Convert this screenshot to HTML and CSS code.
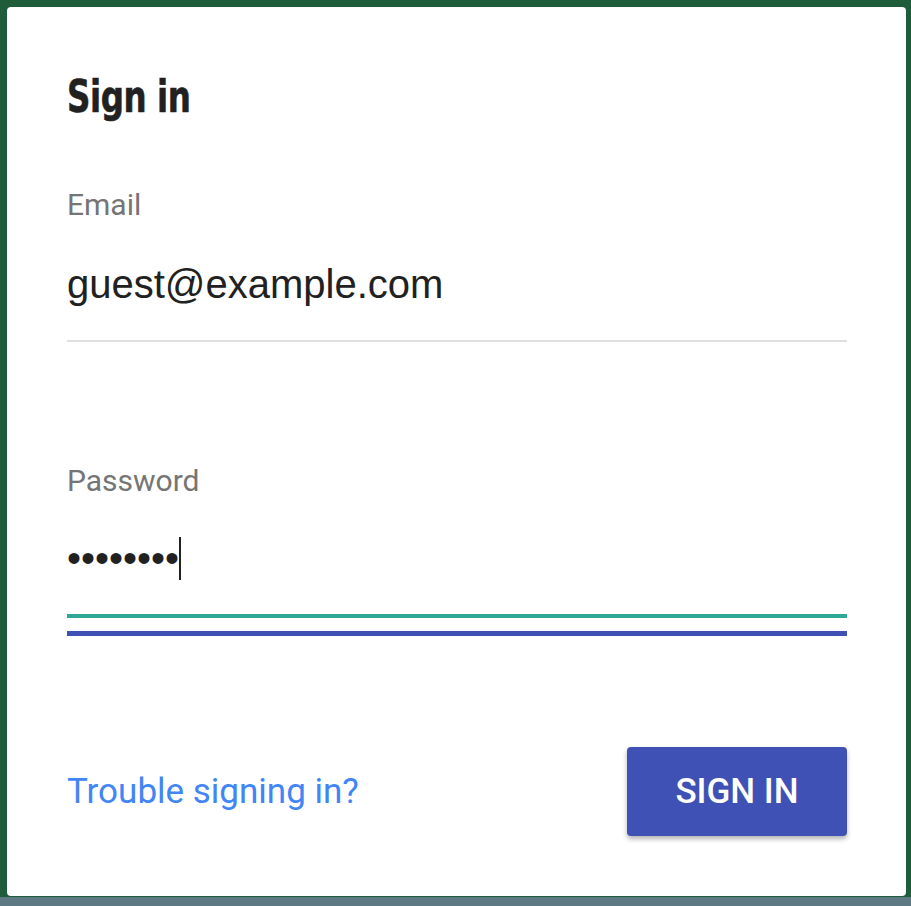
FILE: index.html
```html
<!DOCTYPE html>
<html lang="en">
<head>
<meta charset="utf-8">
<title>Sign in</title>
<link rel="stylesheet" href="styles.css">
</head>
<body>
<div class="backdrop">
  <main class="card">
    <h1 class="title">Sign in</h1>
    <div class="field">
      <label class="label">Email</label>
      <div class="value">guest@example.com</div>
      <div class="underline"></div>
    </div>
    <div class="field field-password">
      <label class="label">Password</label>
      <div class="value"><span class="dots">••••••••</span><span class="caret"></span></div>
      <div class="focus-line teal"></div>
      <div class="focus-line indigo"></div>
    </div>
    <div class="actions">
      <a class="trouble" href="#">Trouble signing in?</a>
      <button class="signin" type="button">SIGN IN</button>
    </div>
  </main>
</div>
</body>
</html>
```
FILE: styles.css
```css
html {
  background: #5d7a84;
}
body {
  margin: 0;
  height: 906px;
  overflow: hidden;
  background: #5d7a84;
}
.backdrop {
  height: 897px;
  box-sizing: border-box;
  padding: 7px 5px 0 7px;
  background: #1f5d3a;
}
.card {
  box-sizing: border-box;
  width: 899px;
  height: 889px;
  background: #ffffff;
  border-radius: 4px;
  padding: 68px 59px 0 60px;
  display: flex;
  flex-direction: column;
}
.title {
  margin: 0;
  font-family: "DejaVu Sans Condensed", "DejaVu Sans", sans-serif;
  font-stretch: condensed;
  font-weight: 700;
  font-size: 44px;
  line-height: 44px;
  letter-spacing: -0.5px;
  color: #212121;
  -webkit-text-stroke: 0.6px #212121;
  transform: scaleX(0.82);
  transform-origin: left center;
}
.title + .field {
  margin-top: 70px;
}
.field {
  display: flex;
  flex-direction: column;
}
.label {
  display: block;
  font-family: Roboto, "Liberation Sans", sans-serif;
  font-size: 30px;
  line-height: 31px;
  color: #757575;
}
.value {
  margin-top: 40px;
  font-family: "Liberation Sans", Arial, sans-serif;
  font-size: 40px;
  line-height: 48px;
  color: #212121;
  white-space: nowrap;
}
.underline {
  margin-top: 32px;
  height: 2px;
  background: #e0e0e0;
}
.field-password {
  margin-top: 123px;
}
.field-password .value {
  margin-top: 38px;
}
.caret {
  display: inline-block;
  width: 2px;
  height: 43px;
  background: #212121;
  vertical-align: -8px;
}
.focus-line {
  height: 4px;
}
.teal {
  margin-top: 32px;
  background: #2fa898;
}
.indigo {
  margin-top: 13px;
  height: 5px;
  background: #3f51b5;
}
.actions {
  margin-top: 111px;
  display: flex;
  justify-content: space-between;
  align-items: center;
}
.trouble {
  font-family: Roboto, "Liberation Sans", sans-serif;
  font-size: 35px;
  color: #4285f4;
  text-decoration: none;
}
.signin {
  width: 220px;
  height: 89px;
  border: none;
  border-radius: 4px;
  background: #3f51b5;
  color: #ffffff;
  font-family: Roboto, "Liberation Sans", sans-serif;
  font-weight: 500;
  font-size: 35px;
  box-shadow: 0 3px 5px rgba(0, 0, 0, 0.3);
  padding: 0;
}
```
